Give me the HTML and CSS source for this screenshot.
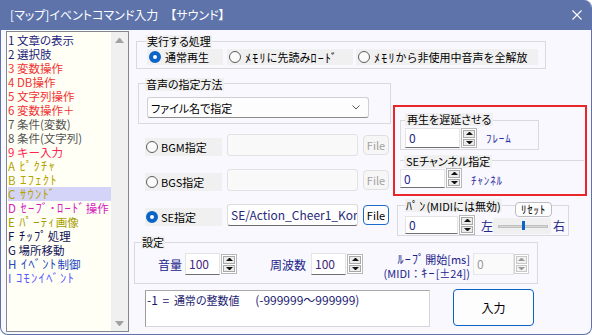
FILE: index.html
```html
<!DOCTYPE html>
<html lang="ja">
<head>
<meta charset="utf-8">
<title>サウンド</title>
<link rel="stylesheet" href="styles.css">
</head>
<body>
<div class="window">
  <div class="titlebar">
    <span class="title pa">[マップ]イベントコマンド入力　【サウンド】</span>
    <svg class="close" width="10" height="10" viewBox="0 0 10 10"><path d="M0.5 0.5 L9.5 9.5 M9.5 0.5 L0.5 9.5" stroke="#fff" stroke-width="1.1" fill="none"/></svg>
  </div>
  <div class="client">
    <div class="list">
      <ul class="items">
        <li class="c-navy pa">1 文章の表示</li>
        <li class="c-navy">2 選択肢</li>
        <li class="c-red">3 変数操作</li>
        <li class="c-red">4 DB操作</li>
        <li class="c-red">5 文字列操作</li>
        <li class="c-red">6 変数操作＋</li>
        <li class="c-grey">7 条件(変数)</li>
        <li class="c-grey">8 条件(文字列)</li>
        <li class="c-pink">9 キー入力</li>
        <li class="c-olive">A <span class="hw">ﾋﾟｸﾁｬ</span></li>
        <li class="c-olive">B <span class="hw">ｴﾌｪｸﾄ</span></li>
        <li class="c-olive sel">C <span class="hw">ｻｳﾝﾄﾞ</span></li>
        <li class="c-mag">D <span class="hw">ｾｰﾌﾞ･ﾛｰﾄﾞ</span>操作</li>
        <li class="c-olive2">E <span class="hw">ﾊﾟｰﾃｨ</span>画像</li>
        <li class="c-dark">F <span class="hw">ﾁｯﾌﾟ</span>処理</li>
        <li class="c-dark">G 場所移動</li>
        <li class="c-blue">H <span class="hw">ｲﾍﾞﾝﾄ</span>制御</li>
        <li class="c-violet">I <span class="hw">ｺﾓﾝｲﾍﾞﾝﾄ</span></li>
      </ul>
      <div class="vscroll"><span class="arr up"></span><span class="arr down"></span></div>
    </div>

    <div class="main">
      <div class="grp g-exec">
        <div class="legend pa">実行する処理</div>
        <div class="radios">
          <div class="rb w1"><span class="radio on"></span>通常再生</div>
          <div class="rb w2"><span class="radio"></span><span class="hw2">ﾒﾓﾘ</span>に先読み<span class="hw2">ﾛｰﾄﾞ</span></div>
          <div class="rb w3"><span class="radio"></span><span class="hw2">ﾒﾓﾘ</span>から非使用中音声を全解放</div>
        </div>
      </div>

      <div class="mid">
        <div class="colL">
          <div class="grp g-method">
            <div class="legend lg-method pa">音声の指定方法</div>
            <div class="select">
              <span class="pa">ファイル名で指定</span>
              <svg class="chev" width="8" height="5" viewBox="0 0 8 5"><path d="M0.5 0.5 L4 4 L7.5 0.5" stroke="#555" stroke-width="1" fill="none"/></svg>
            </div>
          </div>
          <div class="frow r1">
            <div class="rb wf"><span class="radio"></span>BGM指定</div>
            <div class="field disabled"></div>
            <div class="filebtn disabled">File</div>
          </div>
          <div class="frow r2">
            <div class="rb wf"><span class="radio"></span>BGS指定</div>
            <div class="field disabled"></div>
            <div class="filebtn disabled">File</div>
          </div>
          <div class="frow r2">
            <div class="rb wf"><span class="radio on"></span>SE指定</div>
            <div class="field active">SE/Action_Cheer1_Kor</div>
            <div class="filebtn active">File</div>
          </div>
        </div>

        <div class="colR">
          <div class="redbox">
            <div class="grp g-delay">
              <div class="legend lg-delay pa">再生を遅延させる</div>
              <div class="spinrow sr-delay">
                <div class="num w55">0</div>
                <div class="spin"><span class="sb"><i class="tu"></i></span><span class="sb"><i class="td"></i></span></div>
                <span class="unit u-frame">ﾌﾚｰﾑ</span>
              </div>
            </div>
            <div class="g-chan">
              <div class="legend lg-chan pa">SEチャンネル指定</div>
              <div class="spinrow">
                <div class="num w45 h19">0</div>
                <div class="spin h19"><span class="sb"><i class="tu"></i></span><span class="sb"><i class="td"></i></span></div>
                <span class="unit u-chan">ﾁｬﾝﾈﾙ</span>
              </div>
            </div>
          </div>

          <div class="grp g-pan">
            <div class="legrow">
              <div class="legend"><span class="hw2">ﾊﾟﾝ</span>(MIDIには無効)</div>
              <div class="resetbtn">ﾘｾｯﾄ</div>
            </div>
            <div class="spinrow sr-pan">
              <div class="num w53 h18">0</div>
              <div class="spin h18"><span class="sb"><i class="tu"></i></span><span class="sb"><i class="td"></i></span></div>
              <span class="lr l">左</span>
              <div class="slider"><span class="track"></span><span class="thumb"></span></div>
              <span class="lr r">右</span>
            </div>
          </div>
        </div>
      </div>

      <div class="grp g-set">
        <div class="legend lg-set">設定</div>
        <div class="setrow">
          <span class="lab l-vol">音量</span>
          <div class="num w35 h22 val">100</div>
          <div class="spin h20 s-vol"><span class="sb"><i class="tu"></i></span><span class="sb"><i class="td"></i></span></div>
          <span class="lab l-freq">周波数</span>
          <div class="num w35 h22 val">100</div>
          <div class="spin h20"><span class="sb"><i class="tu"></i></span><span class="sb"><i class="td"></i></span></div>
          <div class="looplab"><span class="hw2">ﾙｰﾌﾟ</span>開始[ms]<br>(MIDI：<span class="hw2">ｷｰ</span>[±24])</div>
          <div class="num w41 h22 dis">0</div>
          <div class="spin h20 dspin"><span class="sb"><i class="tu"></i></span><span class="sb"><i class="td"></i></span></div>
        </div>
      </div>

      <div class="bottom">
        <div class="memo">-1 = <span class="pa kj">通常の整数値</span><span class="kj">　</span> (-999999～999999)</div>
        <div class="okbtn">入力</div>
      </div>
    </div>
  </div>
</div>
</body>
</html>
```

FILE: styles.css
```css
* { box-sizing: border-box; }
html, body { margin: 0; padding: 0; }
body {
  width: 592px; height: 335px; overflow: hidden; background: #ffffff;
  font-family: "Noto Sans CJK JP", "Noto Sans", sans-serif;
  font-size: 11px; color: #000;
}
.pa { font-feature-settings: "palt"; }
.hw { font-kerning: none; font-size: 12.5px; letter-spacing: 1.3px; margin-left: 2px; }
.hw2 { font-kerning: none; font-size: 12px; letter-spacing: 1.2px; }
.window {
  width: 592px; height: 335px;
  border: 1px solid #5d73aa; border-top: 0;
  border-radius: 0 8px 8px 8px;
  overflow: hidden;
  background: #f8f8fe;
}
.titlebar {
  height: 30px; background: #5d73aa;
  display: flex; align-items: center; justify-content: space-between;
  padding: 0 9px 0 9px;
}
.title { color: #fff; font-size: 12px; line-height: 14px; }
.close { display: block; }

.client { display: flex; height: 304px; }

/* command list */
.list {
  margin: 1px 0 0 5px; width: 123px; height: 301px;
  border: 1px solid #828790; background: #fffff6;
  display: flex;
}
.items { list-style: none; margin: 0; padding: 1px 0 0 1px; flex: 1; }
.items li { height: 14px; line-height: 14px; white-space: nowrap; font-size: 11.5px; }
.items li.sel { background: #d4d4f8; }
.c-navy { color: #1c1c80; }
.c-red { color: #f03434; }
.c-grey { color: #555555; }
.c-pink { color: #ff2450; }
.c-olive { color: #b3a300; }
.c-olive2 { color: #a69c00; }
.c-mag { color: #d41cbc; }
.c-dark { color: #121258; }
.c-blue { color: #2446c0; }
.c-violet { color: #5858ff; }
.vscroll {
  width: 17px; background: #f0f0f0;
  display: flex; flex-direction: column; align-items: center; justify-content: space-between;
  padding: 6px 0 5px 0;
}
.arr { width: 9px; height: 5px; border-left: 4px solid transparent; border-right: 4px solid transparent; }
.arr.up { border-bottom: 5px solid #a2a2a2; }
.arr.down { border-top: 5px solid #a2a2a2; }

/* right side */
.main { flex: 1; }
.grp { border: 1px solid #d9d9de; }
.legend {
  background: #f0f0f0; width: fit-content; height: 13px; line-height: 13px;
  padding: 0 1px; white-space: nowrap;
}
.g-exec { margin: 11px 0 0 7px; width: 410px; height: 28px; }
.g-exec .legend { margin: -7px 0 0 9px; }
.radios { display: flex; margin: 1px 0 0 10px; }
.rb {
  display: flex; align-items: center; height: 16px; background: #f0f0f0;
  white-space: nowrap;
}
.radio {
  width: 12px; height: 12px; border-radius: 50%;
  border: 1px solid #5c5c5c; background: #fbfbfb;
  margin: 0 4px 0 2px; flex: none;
}
.radio.on {
  border: 4px solid #0a64c8; background: #ffffff;
}
.w1 { width: 76px; }
.w2 { width: 126px; margin-left: 4px; }
.w3 { width: 182px; margin-left: 3px; }

.mid { display: flex; }
.colL { width: 262px; }
.g-method { margin: 14px 0 0 9px; width: 253px; height: 41px; }
.lg-method { margin: -6px 0 0 6px; }
.select {
  margin: 6px 0 0 8px; width: 222px; height: 21px;
  background: #fdfdfd; border: 1px solid #d0d0d0; border-bottom-color: #8c8c8c;
  border-radius: 3px;
  display: flex; align-items: center; justify-content: space-between;
  padding: 0 8px 0 3px;
}
.chev { display: block; }

.frow { display: flex; align-items: center; height: 22px; }
.r1 { margin-top: 10px; }
.r2 { margin-top: 13px; }
.wf { width: 77px; height: 18px; margin-left: 16px; align-self: flex-end; }
.wf .radio { margin: 0 3px 0 1px; }
.field {
  margin-left: 5px; width: 131px; height: 22px;
  border: 1px solid #e2e2e2; border-radius: 3px; background: #f9f9f9;
  font-size: 12px; line-height: 20px; padding: 0 3px; white-space: nowrap; overflow: hidden;
}
.field.active { background: #fff; border-color: #dcdcdc; border-bottom-color: #6a6a6a; color: #2a2a7a; }
.filebtn {
  margin-left: 5px; width: 26px; height: 20px; border-radius: 4px;
  display: flex; align-items: center; justify-content: center; font-size: 11px;
}
.filebtn.disabled { border: 1px solid #e0e0e0; background: #f6f6f6; color: #a0a0a0; }
.filebtn.active { border: 1px solid #1a6cc8; background: #fdfdfd; color: #000; }

.colR { margin-left: 2px; }
.redbox {
  margin-top: 36px; width: 194px; height: 91px;
  border: 2px solid #e8262b;
}
.g-delay { margin: 13px 0 0 5px; width: 139px; height: 30px; }
.lg-delay { margin: -8px 0 0 4px; padding: 0 2px; }
.spinrow { display: flex; align-items: center; }
.sr-delay { margin: 2px 0 0 4px; }
.num {
  height: 20px; background: #fff;
  border: 1px solid #e4e4e4; border-bottom-color: #707070;
  color: #26268a; font-size: 12px; line-height: 18px; padding: 0 3px;
}
.w55 { width: 55px; }
.w45 { width: 45px; }
.w53 { width: 53px; }
.w35 { width: 35px; }
.w41 { width: 41px; }
.h19 { height: 19px; line-height: 17px; }
.h18 { height: 18px; line-height: 16px; }
.h22 { height: 22px; line-height: 20px; }
.h20 { height: 20px; }
.spin {
  width: 16px; height: 20px; margin-left: 1px;
  border: 1px solid #b8b8b8; background: #fff;
  display: flex; flex-direction: column; padding: 1px; gap: 1px;
}
.sb {
  flex: 1; background: #ececec; border: 1px solid #a8a8a8;
  display: flex; align-items: center; justify-content: center;
}
.tu { width: 7px; height: 3px; border-left: 3px solid transparent; border-right: 3px solid transparent; border-bottom: 3px solid #111; }
.td { width: 7px; height: 3px; border-left: 3px solid transparent; border-right: 3px solid transparent; border-top: 3px solid #111; }
.unit { color: #2c2ca0; font-size: 11px; font-kerning: none; letter-spacing: 0.9px; white-space: nowrap; }
.u-frame { margin-left: 9px; }
.u-chan { margin-left: 9px; margin-top: 3px; }

.g-chan { margin: 10px 0 0 5px; width: 184px; border-top: 1px solid #d9d9de; }
.lg-chan { margin: -6px 0 0 4px; padding: 0 2px; }

.g-pan { margin: 9px 0 0 4px; width: 172px; height: 31px; }
.legrow { display: flex; align-items: flex-start; height: 13px; width: 147px; margin: -7px 0 0 7px; }
.resetbtn {
  margin: 3px 0 0 auto; width: 37px; height: 15px; flex: none;
  border: 1px solid #bdbdbd; border-radius: 4px; background: #fdfdfd;
  font-size: 11px; font-kerning: none; letter-spacing: 0.8px; line-height: 13px; text-align: center;
}
.sr-pan { margin: 3px 0 0 7px; }
.lr { color: #26268a; font-size: 12px; }
.lr.l { margin-left: 6px; }
.lr.r { margin-left: 2px; }
.slider {
  width: 58px; height: 16px; background: #f0f0f0; margin-top: 2px;
  display: flex; align-items: center; position: relative; padding: 0 3px 0 5px;
}
.track { flex: 1; height: 3px; background: #d6d6d6; border: 1px solid #c0c0c0; }
.thumb { position: absolute; left: 29px; top: 3px; width: 3px; height: 9px; background: #0a64c8; }

.g-set { margin: 6px 0 0 5px; width: 404px; height: 42px; }
.lg-set { margin: -7px 0 0 6px; }
.setrow { display: flex; align-items: center; height: 22px; margin-top: 4px; }
.lab { color: #22228a; font-size: 12px; white-space: nowrap; }
.l-vol { margin-left: 23px; margin-right: 3px; }
.l-freq { margin-left: 33px; margin-right: 5px; }
.val { color: #44287a; }
.looplab {
  margin-left: auto; margin-right: 3px; align-self: flex-start; margin-top: -1px;
  text-align: right; line-height: 14px; color: #22228a; white-space: nowrap;
}
.num.dis { background: #fafafa; border-color: #e6e6e6; color: #9a9a9a; }
.dspin { width: 15px; margin-left: 0; margin-right: 8px; border-color: #d0d0d0; }
.dspin .sb { border-color: #c8c8c8; background: #f2f2f2; }
.dspin .tu { border-bottom-color: #9a9a9a; }
.dspin .td { border-top-color: #9a9a9a; }

.bottom { display: flex; margin-top: 6px; }
.memo {
  margin-left: 16px; width: 285px; height: 37px; background: #fff;
  border: 1px solid #d6d6d6; border-left-color: #9c9c9c; border-top-color: #a8a8a8;
  padding: 2px 1px; line-height: 14px; color: #1c1c70; white-space: pre;
  font-size: 12px; word-spacing: 2px;
}
.kj { font-size: 11px; }
.okbtn {
  margin: -1px 0 0 23px; width: 81px; height: 37px;
  border: 1px solid #0a64c8; border-radius: 4px; background: #fdfdfd;
  display: flex; align-items: center; justify-content: center; font-size: 12px;
}
```
